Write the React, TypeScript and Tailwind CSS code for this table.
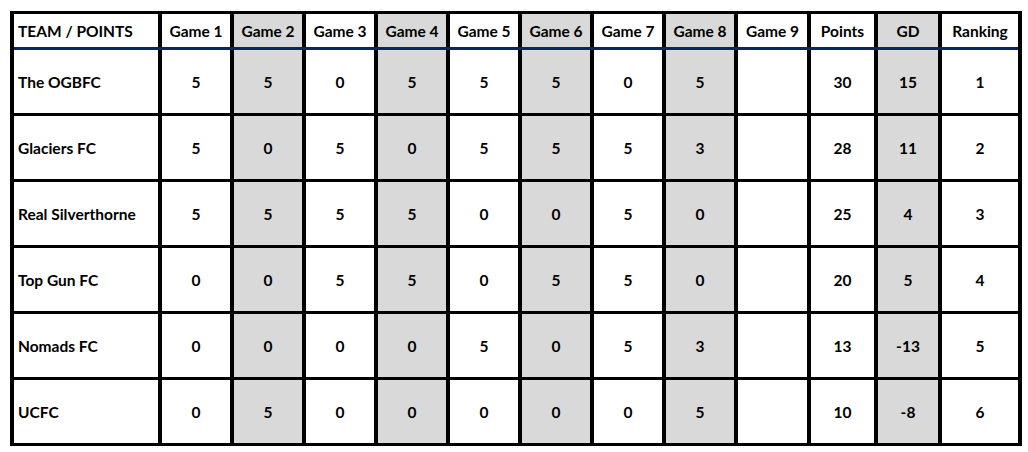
const teams = [
  { name: "The OGBFC", games: ["5", "5", "0", "5", "5", "5", "0", "5", ""], points: "30", gd: "15", rank: "1" },
  { name: "Glaciers FC", games: ["5", "0", "5", "0", "5", "5", "5", "3", ""], points: "28", gd: "11", rank: "2" },
  { name: "Real Silverthorne", games: ["5", "5", "5", "5", "0", "0", "5", "0", ""], points: "25", gd: "4", rank: "3" },
  { name: "Top Gun FC", games: ["0", "0", "5", "5", "0", "5", "5", "0", ""], points: "20", gd: "5", rank: "4" },
  { name: "Nomads FC", games: ["0", "0", "0", "0", "5", "0", "5", "3", ""], points: "13", gd: "-13", rank: "5" },
  { name: "UCFC", games: ["0", "5", "0", "0", "0", "0", "0", "5", ""], points: "10", gd: "-8", rank: "6" },
];

const cols =
  "grid grid-cols-[144px_68px_68px_68px_68px_68px_68px_68px_68px_69px_63px_60px_76px] gap-x-[4px]";

// shaded columns: game 2,4,6,8 and GD
const shaded = (i: number) => (i >= 1 && i <= 9 && i % 2 === 0) || i === 11;

export default function App() {
  const header = ["TEAM / POINTS", ...Array.from({ length: 9 }, (_, i) => `Game ${i + 1}`), "Points", "GD", "Ranking"];

  return (
    <div className="w-[1028px] h-[452px] bg-white pt-[11px] pl-[10px] font-['Lato',sans-serif] font-bold text-black">
      <div className="w-[1012px] border-x-4 border-y-[3px] border-black bg-black">
        <div className={cols}>
          {header.map((h, i) => (
            <div
              key={h}
              className={`h-[33px] pt-[2px] flex items-center text-[15.5px] whitespace-nowrap ${i === 0 ? "pl-[4px]" : "justify-center"} ${shaded(i) ? "bg-[#d9d9d9]" : "bg-white"}`}
            >
              {h}
            </div>
          ))}
        </div>
        <div className="h-[3px] bg-[#0b2560]" />
        <div className={`${cols} gap-y-[3px]`}>
          {teams.map((t) =>
            [t.name, ...t.games, t.points, t.gd, t.rank].map((v, i) => (
              <div
                key={t.name + i}
                className={`h-[63px] pt-[2px] flex items-center text-[15.5px] whitespace-nowrap ${i === 0 ? "pl-[4px]" : "justify-center"} ${shaded(i) ? "bg-[#d9d9d9]" : "bg-white"}`}
              >
                {v}
              </div>
            ))
          )}
        </div>
      </div>
    </div>
  );
}
